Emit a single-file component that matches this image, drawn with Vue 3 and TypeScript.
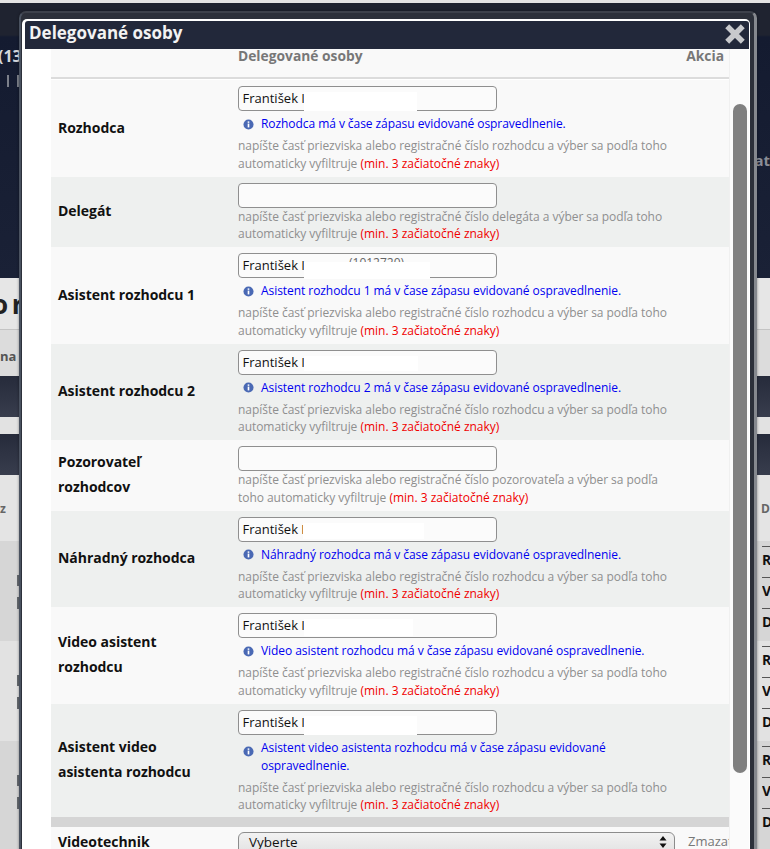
<script setup lang="ts">
interface Person {
  label: string[]
  subject?: string
  role: string
  mask?: string
  ghost?: string
  tallNote?: boolean
}

const people: Person[] = [
  { label: ['Rozhodca'], subject: 'Rozhodca', role: 'rozhodcu', mask: 'm1' },
  { label: ['Delegát'], role: 'delegáta' },
  { label: ['Asistent rozhodcu 1'], subject: 'Asistent rozhodcu 1', role: 'rozhodcu', mask: 'm2', ghost: '(1012720)' },
  { label: ['Asistent rozhodcu 2'], subject: 'Asistent rozhodcu 2', role: 'rozhodcu', mask: 'm3' },
  { label: ['Pozorovateľ', 'rozhodcov'], role: 'pozorovateľa' },
  { label: ['Náhradný rozhodca'], subject: 'Náhradný rozhodca', role: 'rozhodcu', mask: 'm4' },
  { label: ['Video asistent', 'rozhodcu'], subject: 'Video asistent rozhodcu', role: 'rozhodcu', mask: 'm5' },
  { label: ['Asistent video', 'asistenta rozhodcu'], subject: 'Asistent video asistenta rozhodcu', role: 'rozhodcu', mask: 'm6', tallNote: true },
]

const sideRows = ['R', 'V', 'D', 'R', 'V', 'D', 'R', 'V', 'D']
</script>

<template>
  <div class="page">
    <div class="backdrop">
      <div class="strip"></div>
      <div class="band-dark">
        <span class="bg-num">(13</span>
        <span class="bg-at">at</span>
      </div>
      <div class="band-title"><span>o r</span></div>
      <div class="band-sub"><span>na</span></div>
      <div class="band-bar"></div>
      <div class="band-gap"></div>
      <div class="band-bar2"></div>
      <div class="band-cols"><span>z</span><span>D</span></div>
      <div class="band-list">
        <div v-for="(s, i) in sideRows" :key="i" class="side-row" :class="{ group: i % 3 === 0 }">{{ s }}</div>
      </div>
    </div>

    <div class="frame">
      <section class="dialog">
        <header class="titlebar">
          <h1>Delegované osoby</h1>
          <svg class="close" viewBox="0 0 20 20" aria-label="Zavrieť">
            <path d="M3.5 3.5 L16.5 16.5 M16.5 3.5 L3.5 16.5" />
          </svg>
        </header>

        <div class="body">
          <div class="table">
            <div class="head">
              <span class="head-name">Delegované osoby</span>
              <span class="head-action">Akcia</span>
            </div>

            <div v-for="p in people" :key="p.label.join()" class="row">
              <div class="label">
                <div v-for="l in p.label" :key="l">{{ l }}</div>
              </div>
              <div class="field">
                <div class="input">
                  <span v-if="p.subject">František I</span>
                  <span v-if="p.ghost" class="ghost">{{ p.ghost }}</span>
                  <i v-if="p.mask" class="mask" :class="p.mask"></i>
                </div>
                <div v-if="p.subject" class="note" :class="{ tall: p.tallNote }">
                  <svg class="info" viewBox="0 0 12 12">
                    <circle cx="6" cy="6" r="5.5" fill="#4a69b4" />
                    <rect x="5.1" y="5" width="1.8" height="4.2" fill="#fff" />
                    <rect x="5.1" y="2.6" width="1.8" height="1.6" fill="#fff" />
                  </svg>
                  <span>{{ p.subject }} má v čase zápasu evidované ospravedlnenie.</span>
                </div>
                <p class="help" :class="{ bare: !p.subject }">
                  napíšte časť priezviska alebo registračné číslo {{ p.role }} a výber sa podľa toho automaticky vyfiltruje
                  <em>(min. 3 začiatočné znaky)</em>
                </p>
              </div>
            </div>

            <div class="divider"></div>

            <div class="row select-row">
              <div class="label">Videotechnik</div>
              <div class="select">
                <span>Vyberte</span>
                <svg class="updown" viewBox="0 0 8 14">
                  <path d="M4 1 L7.5 5.5 H0.5 Z M4 13 L7.5 8.5 H0.5 Z" />
                </svg>
              </div>
              <span class="clear">Zmazať</span>
            </div>
          </div>

          <div class="track"><div class="thumb"></div></div>
        </div>
      </section>
    </div>
  </div>
</template>

<style>
html, body { margin: 0; padding: 0; background: #ddd; }
</style>

<style scoped>
.page {
  position: relative;
  width: 770px;
  height: 849px;
  overflow: hidden;
  font-family: "Open Sans", "Noto Sans", sans-serif;
}

/* page behind the dialog */
.backdrop { display: flex; flex-direction: column; height: 849px; font-weight: 700; color: #111; }
.strip { height: 3px; background: #e4e4e4; }
.band-dark {
  height: 275px;
  background: linear-gradient(#1f2330 0, #1f2330 32px, #141b30 34px, #1a2136 100%);
  position: relative;
  display: flex;
  justify-content: space-between;
  color: #d4d6da;
}
.band-dark::before,
.band-dark::after {
  content: "";
  position: absolute;
  top: 72px;
  width: 2px;
  height: 12px;
  background: #7c808a;
}
.band-dark::before { left: 7px; }
.band-dark::after { left: 17px; }
.bg-num { font-size: 16px; line-height: 20px; margin: 43px 0 0 -2px; }
.bg-at { font-size: 15px; line-height: 20px; margin: 147px 0 0 0; color: #8a8d96; }
.band-title {
  height: 52px;
  background: #e6e6e6;
  border-bottom: 1px solid #c4c4c4;
  box-sizing: border-box;
  font-size: 26px;
  line-height: 52px;
  color: #222;
  text-indent: -8px;
  word-spacing: -3px;
}
.band-sub {
  height: 46px;
  background: #dcdcdc;
  font-size: 13px;
  line-height: 52px;
  color: #555;
}
.band-bar, .band-bar2 { background: linear-gradient(#262b3b, #383d4d); }
.band-bar { height: 41px; }
.band-gap { height: 17px; background: #e2e2e2; }
.band-bar2 { height: 41px; }
.band-cols {
  height: 66px;
  background: #e4e4e4;
  display: flex;
  justify-content: space-between;
  align-items: center;
  font-size: 12px;
  color: #666;
}
.band-list {
  position: relative;
  flex: 1;
  background: linear-gradient(#d6d6d6 0, #d6d6d6 100px, #e2e2e2 100px, #e2e2e2 200px, #d6d6d6 200px);
  display: flex;
  flex-direction: column;
  align-items: flex-end;
  padding-top: 5px;
}
.band-list::before {
  content: "";
  position: absolute;
  left: 17px;
  top: 34px;
  width: 2px;
  height: 268px;
  background: repeating-linear-gradient(#666a70 0 11px, transparent 11px 22px, #666a70 22px 34px, transparent 34px 100px);
}
.side-row {
  width: 8px;
  height: 31px;
  box-sizing: border-box;
  border-top: 1px solid #555;
  font-size: 14px;
  line-height: 26px;
  overflow: hidden;
  color: #111;
}
.side-row.group { margin-top: 7px; }
.side-row:first-child { margin-top: 0; }

/* dialog */
.frame {
  position: absolute;
  left: 19px;
  top: 11px;
  width: 738px;
  height: 860px;
  box-sizing: border-box;
  background: #2c303a;
  border-left: 2px solid #4a5260;
  border-right: 3px solid #85888e;
  border-top: 2px solid #3d414b;
  border-radius: 7px 7px 0 0;
  padding: 6px 4px 0 1px;
  box-shadow: 0 0 3px rgba(0, 0, 0, 0.4);
}
.dialog {
  height: 100%;
  box-sizing: border-box;
  background: #fff;
  border: solid #fff;
  border-width: 2px 1px 0 3px;
  border-radius: 5px 5px 0 0;
  display: flex;
  flex-direction: column;
}
.titlebar {
  height: 28px;
  flex: none;
  background: #22283a;
  border-radius: 3px 3px 0 0;
  display: flex;
  align-items: center;
  justify-content: space-between;
  padding: 0 2px 0 4px;
}
.titlebar h1 {
  margin: 0 0 4px;
  font-size: 17px;
  font-weight: 700;
  color: #f2f2f2;
  line-height: 24px;
}
.close { width: 24px; height: 24px; margin-bottom: 2px; }
.close path { fill: none; stroke: #c8c9cc; stroke-width: 4.6; stroke-linecap: butt; }

.body { position: relative; flex: 1; padding-left: 26px; overflow: hidden; }
.table { width: 685px; }

.head {
  height: 30px;
  box-sizing: border-box;
  background: #f9f9f9;
  border-bottom: 2px solid #dcdcdc;
  display: flex;
  justify-content: space-between;
  padding: 0 12px 0 187px;
  font-size: 13.8px;
  line-height: 14px;
  font-weight: 700;
  color: #777;
  margin-bottom: 1px;
}

.row {
  width: 678px;
  display: flex;
  align-items: center;
}
.row:nth-child(even) { background: #f9f9f9; }
.row:nth-child(odd) { background: #eef0ef; }
.label {
  width: 187px;
  flex: none;
  box-sizing: border-box;
  padding: 0 0 2px 7px;
  font-size: 14px;
  font-weight: 700;
  line-height: 25px;
  letter-spacing: -0.04px;
  color: #111;
}
.field { padding: 6px 0 4.5px; width: 445px; }
.input {
  position: relative;
  width: 259px;
  height: 25px;
  box-sizing: border-box;
  background: #fbfbfb;
  border: 1.5px solid #8f8f8f;
  border-radius: 4px;
  font-size: 13px;
  line-height: 22px;
  padding-left: 3.5px;
  color: #111;
}
.ghost { position: absolute; left: 110px; top: -2px; font-size: 12px; color: #666; }
.mask { position: absolute; left: 64.5px; background: #fff; display: block; }
.m1 { top: 4.5px; height: 19px; width: 113px; }
.m2 { top: 7.5px; height: 17px; width: 126px; }
.m3 { top: 5.5px; height: 15px; width: 114px; }
.m4 { top: 5.5px; height: 16px; width: 121px; left: 63.5px; }
.m5 { top: 4.5px; height: 17px; width: 109px; }
.m6 { top: 5.5px; height: 19px; width: 113px; }

.note {
  display: flex;
  align-items: center;
  gap: 7px;
  padding-left: 5px;
  margin: 4px 0;
  font-size: 12px;
  line-height: 18px;
  letter-spacing: -0.06px;
  color: #0000f0;
}
.info { width: 11px; height: 11px; flex: none; }
.note.tall .info { align-self: flex-start; margin-top: 7px; }

.help {
  margin: 0;
  font-size: 12px;
  line-height: 17.5px;
  letter-spacing: -0.04px;
  color: #8f8f8f;
}
.help.bare { margin-top: 0; }
.note.tall + .help { margin-bottom: -1.5px; }
.help em { font-style: normal; color: #f00000; letter-spacing: 0; }

.divider { width: 685px; height: 10px; background: #d5d5d5; }

.row.select-row { align-items: flex-start; height: 40px; background: #f9f9f9; }
.select-row .label { padding-top: 2px; }
.select {
  width: 437px;
  height: 30px;
  margin-top: 5px;
  box-sizing: border-box;
  flex: none;
  background: linear-gradient(#f2f2f2, #dcdcdc);
  border: 1.5px solid #8c8c8c;
  border-radius: 6px;
  display: flex;
  justify-content: space-between;
  padding: 0 7px 0 10px;
  font-size: 13.5px;
  line-height: 18px;
  color: #111;
}
.updown { width: 8px; height: 14px; margin-top: 2px; }
.updown path { fill: #111; }
.clear { font-size: 13px; color: #777; margin: 5px 0 0 13px; white-space: nowrap; line-height: 18px; }

.track {
  position: absolute;
  left: 704px;
  top: 0;
  bottom: 0;
  width: 20px;
  background: #fbfbfb;
  border-left: 1px solid #f0f0f0;
  box-sizing: border-box;
}
.thumb {
  position: absolute;
  left: 3px;
  top: 55px;
  width: 14px;
  height: 669px;
  background: #808080;
  border-radius: 7px;
}
</style>
